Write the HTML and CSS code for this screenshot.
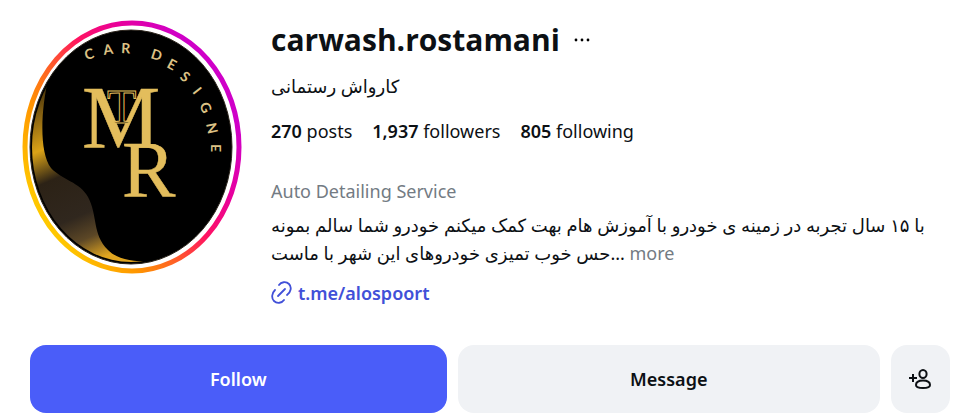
FILE: index.html
```html
<!DOCTYPE html>
<html lang="en">
<head>
    <meta charset="UTF-8">
    <meta name="viewport" content="width=device-width, initial-scale=1.0">
    <title>carwash.rostamani</title>
    <link rel="stylesheet" href="styles.css">
</head>
<body>
    <main class="profile">
        <header class="profile-header">
            <svg class="avatar" viewBox="0 0 220 254" role="img" aria-label="Profile picture">
                <defs>
                    <linearGradient id="ring" x1="0.1" y1="0.8" x2="0.9" y2="0.2">
                        <stop offset="0" stop-color="#ffc800"/>
                        <stop offset="0.22" stop-color="#ff9500"/>
                        <stop offset="0.4" stop-color="#ff5a2a"/>
                        <stop offset="0.56" stop-color="#ff1361"/>
                        <stop offset="0.75" stop-color="#e8009c"/>
                        <stop offset="0.95" stop-color="#cf00c8"/>
                    </linearGradient>
                    <linearGradient id="wave" gradientUnits="userSpaceOnUse" x1="12" y1="60" x2="90" y2="242">
                        <stop offset="0" stop-color="#2a1e06"/>
                        <stop offset="0.18" stop-color="#8a6412"/>
                        <stop offset="0.34" stop-color="#dba317"/>
                        <stop offset="0.5" stop-color="#2c2216"/>
                        <stop offset="0.72" stop-color="#30271e"/>
                        <stop offset="0.84" stop-color="#5c4726"/>
                        <stop offset="0.96" stop-color="#e0a520"/>
                    </linearGradient>
                    <clipPath id="photo">
                        <ellipse cx="109" cy="127" rx="99" ry="115"/>
                    </clipPath>
                </defs>
                <ellipse cx="110" cy="127" rx="107" ry="124" fill="none" stroke="url(#ring)" stroke-width="5"/>
                <ellipse cx="109" cy="127" rx="101" ry="117" fill="#000" stroke="#2b241b" stroke-width="1"/>
                <g clip-path="url(#photo)">
                    <path d="M26 60 C19 90 17 132 29 148 C40 160 58 162 66 177 C76 196 70 214 86 230 C96 240 110 241 128 242 L90 254 L0 220 L0 60 Z" fill="url(#wave)"/>
                </g>
                <g class="monogram">
                    <text x="60" y="127" font-size="88">M</text>
                    <text class="thin" x="85" y="103" font-size="48">T</text>
                    <text x="100" y="177" font-size="80">R</text>
                </g>
                <text class="arc" x="64 82 99 117 128 144 157 170 177 184 189" y="40 35 33 33 38 47 58 72 85 104 124" rotate="-15 -8 3 10 18 28 40 52 65 78 90">CAR DESIGNE</text>
            </svg>

            <section class="info">
                <div class="title-row">
                    <h1>carwash.rostamani</h1>
                    <button class="options" type="button" aria-label="Options">
                        <svg width="16" height="4" viewBox="0 0 16 4">
                            <circle cx="2" cy="2" r="1.4"/>
                            <circle cx="8" cy="2" r="1.4"/>
                            <circle cx="14" cy="2" r="1.4"/>
                        </svg>
                    </button>
                </div>
                <p class="name" lang="fa">کارواش رستمانی</p>
                <ul class="stats">
                    <li><b>270</b> posts</li>
                    <li><b>1,937</b> followers</li>
                    <li><b>805</b> following</li>
                </ul>
                <p class="category">Auto Detailing Service</p>
                <p class="bio">
                    <span lang="fa">با ۱۵ سال تجربه در زمینه ی خودرو با آموزش هام بهت کمک میکنم خودرو شما سالم بمونه</span><br>
                    <span lang="fa">حس خوب تمیزی خودروهای این شهر با ماست</span>... <button class="more" type="button">more</button>
                </p>
                <a class="link" href="https://t.me/alospoort">
                    <svg width="21" height="24" viewBox="0 0 21 24" fill="none" stroke="currentColor" stroke-width="1.8" stroke-linecap="round">
                        <path d="M8 4 C10 1 15 0 18 3 C21 6 20 11 16 14"/>
                        <path d="M13 19 C11 22 6 23 3 20 C0 17 1 12 4 9"/>
                        <path d="M7 15 L14 8"/>
                    </svg>
                    <span>t.me/alospoort</span>
                </a>
            </section>
        </header>

        <div class="actions">
            <button class="btn follow" type="button">Follow</button>
            <button class="btn" type="button">Message</button>
            <button class="btn" type="button" aria-label="Similar accounts">
                <svg width="22" height="20" viewBox="0 0 22 20" fill="none" stroke="currentColor" stroke-width="2">
                    <ellipse cx="14" cy="5" rx="3.6" ry="4"/>
                    <path d="M7 16 C7 13 10 11.5 14 11.5 C18 11.5 21 13 21 16 C21 18.5 19 19 14 19 C9 19 7 18.5 7 16 Z"/>
                    <path d="M0 9 H8 M4 5 V13"/>
                </svg>
            </button>
        </div>
    </main>
</body>
</html>
```

FILE: styles.css
```css
* {
    box-sizing: border-box;
}

body {
    margin: 0;
    background-color: #fff;
    color: #0c1014;
    font-family: 'Noto Sans', 'DejaVu Sans', sans-serif;
    font-size: 18px;
    line-height: 28px;
}

h1, p, ul {
    margin: 0;
    padding: 0;
}

button {
    border: none;
    background: none;
    padding: 0;
    color: inherit;
    font: inherit;
    cursor: pointer;
}

.profile {
    padding: 20px 30px 7px;
}

.profile-header {
    display: flex;
    align-items: flex-start;
    gap: 29px;
    margin-left: -8px;
}

.avatar {
    flex: none;
    width: 220px;
}

.monogram {
    fill: #e3bd5c;
    stroke: #e3bd5c;
    stroke-width: 0.5;
    font-family: 'Liberation Serif', serif;
}

.monogram .thin {
    fill: #000;
    stroke-width: 1;
}

.arc {
    fill: #dcc184;
    font-family: Lato, sans-serif;
    font-size: 14px;
    font-weight: bold;
}

.info {
    flex: 1;
    min-width: 0;
}

.title-row {
    display: flex;
    align-items: center;
    gap: 14px;
}

h1 {
    font-family: 'Open Sans', sans-serif;
    font-size: 30px;
    line-height: 40px;
    font-weight: bold;
}

.options {
    display: flex;
}

.name {
    margin-top: 12px;
}

.stats {
    display: flex;
    gap: 20px;
    margin-top: 17px;
    list-style: none;
}

.stats b {
    font-weight: 600;
}

.category {
    margin-top: 32px;
    color: #737b83;
}

.bio {
    margin-top: 6px;
}

.more {
    color: #737b83;
}

.link {
    display: inline-flex;
    align-items: center;
    gap: 6px;
    margin-top: 12px;
    color: #4150d8;
    font-weight: 600;
    text-decoration: none;
}

.actions {
    display: grid;
    grid-template-columns: 71fr 72fr 59px;
    gap: 11px;
    margin-top: 33px;
}

.btn {
    display: flex;
    align-items: center;
    justify-content: center;
    height: 68px;
    border-radius: 16px;
    background-color: #f0f2f5;
    font-weight: 600;
}

.follow {
    background-color: #4a5df9;
    color: #fff;
}
```
